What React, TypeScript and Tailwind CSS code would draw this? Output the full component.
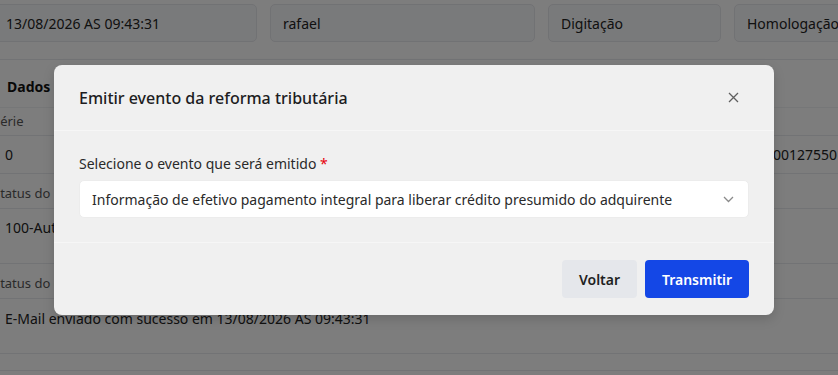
import React from "react";

const font = { fontFamily: '"Noto Sans", "Open Sans", sans-serif' };

function Field({ w, text }: { w: string; text: string }) {
  return (
    <div className={`${w} h-[38px] shrink-0 rounded-[5px] border border-[#e2e4e8] bg-[#f3f4f6] px-[12px] flex items-center text-[14px] text-[#222]`}>
      {text}
    </div>
  );
}

export default function App() {
  return (
    <div style={font} className="relative w-[838px] h-[375px] overflow-hidden bg-[#fbfbfb]">
      {/* underlying page */}
      <div className="ml-[-7px]">
        <div className="flex gap-[13px] pt-[4px] h-[60px] border-b border-[#e5e7eb]">
          <Field w="w-[264px]" text="13/08/2026 AS 09:43:31" />
          <Field w="w-[265px]" text="rafael" />
          <Field w="w-[173px]" text="Digitação" />
          <Field w="w-[200px]" text="Homologação" />
        </div>
        <div className="h-[48px] flex items-center pt-[6px] pl-[14px] text-[14px] font-bold text-[#111] border-b border-[#eceef1]">
          Dados
        </div>
        <div className="flex h-[28px] items-center pt-[1px] border-b border-[#e5e7eb] text-[13px] text-[#555]">
          <div className="w-[780px]">Série</div>
        </div>
        <div className="flex h-[38px] items-center border-b border-[#e5e7eb] text-[14px] text-[#222]">
          <div className="w-[780px] pl-[12px]">0</div>
          <div>00127550</div>
        </div>
        <div className="flex h-[35px] items-center pt-[5px] border-b border-[#e5e7eb] text-[13px] text-[#555]">
          <div>Status do processamento</div>
        </div>
        <div className="flex h-[55px] items-start pt-[8px] border-b border-[#e5e7eb] text-[14px] text-[#222]">
          <div className="pl-[12px]">100-Autorizado o uso da NF-e</div>
        </div>
        <div className="flex h-[35px] items-center pt-[5px] border-b border-[#e5e7eb] text-[13px] text-[#555]">
          <div>Status do envio de e-mail</div>
        </div>
        <div className="flex h-[55px] items-start pt-[9px] border-b border-[#e5e7eb] text-[14px] text-[#222]">
          <div className="pl-[12px]">E-Mail enviado com sucesso em 13/08/2026 AS 09:43:31</div>
        </div>
        <div className="h-[17px] border-b border-[#e5e7eb]" />
      </div>

      {/* overlay */}
      <div className="absolute inset-0 bg-black/50">
        <div className="absolute left-[54px] top-[65px] w-[720px] rounded-[8px] bg-[#f0f0f0] shadow-[0_4px_12px_rgba(0,0,0,0.15)]">
          <div className="h-[66px] px-[25px] flex items-center justify-between border-b border-[#f6f6f6]">
            <div className="text-[16px] font-medium text-[#1d1d1f]">Emitir evento da reforma tributária</div>
            <svg width="11" height="11" viewBox="0 0 11 11" className="mr-[10px]">
              <path d="M1 1L10 10M10 1L1 10" stroke="#5f5f5f" strokeWidth="1.3" />
            </svg>
          </div>
          <div className="px-[25px] pt-[23px] pb-[24px] border-b border-[#f6f6f6]">
            <div className="text-[14px] leading-[20px] text-[#2a2a2a] mb-[6px]">
              Selecione o evento que será emitido <span className="text-[#e7000b]">*</span>
            </div>
            <div className="h-[38px] rounded-[5px] bg-white border border-[#ececec] flex items-center justify-between pl-[12px] pr-[14px] text-[14px] text-[#2a2a2a]">
              <span>Informação de efetivo pagamento integral para liberar crédito presumido do adquirente</span>
              <svg width="11" height="7" viewBox="0 0 11 7">
                <path d="M1 1L5.5 5.5L10 1" stroke="#8a8a8a" strokeWidth="1.3" fill="none" />
              </svg>
            </div>
          </div>
          <div className="h-[72px] px-[25px] flex items-center justify-end gap-[8px]">
            <button className="w-[75px] h-[38px] rounded-[4px] bg-[#e5e7eb] text-[14px] font-semibold text-[#1f1f1f]">Voltar</button>
            <button className="w-[104px] h-[38px] rounded-[4px] bg-[#1447e6] text-[14px] font-semibold text-white">Transmitir</button>
          </div>
        </div>
      </div>
    </div>
  );
}
